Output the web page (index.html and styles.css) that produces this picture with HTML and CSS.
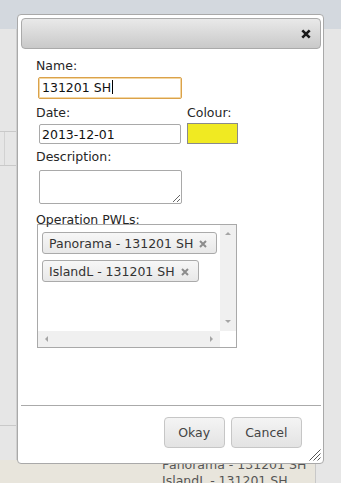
FILE: index.html
```html
<!DOCTYPE html>
<html>
<head>
<meta charset="utf-8">
<link rel="stylesheet" href="styles.css">
</head>
<body>
<div class="page">
  <div class="topbar"></div>
  <div class="main">
    <div class="side">
      <div class="side-row"><div class="side-cell"></div></div>
      <div class="side-rest"></div>
    </div>
  </div>
  <div class="strip">
    <div class="strip-beige">
      <div class="strip-list">
        <div>Panorama - 131201 SH</div>
        <div>IslandL - 131201 SH</div>
      </div>
    </div>
  </div>

  <div class="dialog">
    <div class="titlebar">
      <span class="close" title="Close">
        <svg width="10" height="10" viewBox="0 0 10 10"><path d="M1.3 1.3 L8.7 8.7 M8.7 1.3 L1.3 8.7" stroke="#1a1a1a" stroke-width="2.6" fill="none"/></svg>
      </span>
    </div>
    <div class="form">
      <label class="lbl">Name:</label>
      <div class="field name-field">131201 SH<span class="caret"></span></div>
      <div class="pair">
        <div class="col-date">
          <label class="lbl">Date:</label>
          <input class="field date-field" value="2013-12-01">
        </div>
        <div class="col-colour">
          <label class="lbl">Colour:</label>
          <div class="swatch"></div>
        </div>
      </div>
      <label class="lbl lbl-desc">Description:</label>
      <textarea class="desc"></textarea>
      <label class="lbl lbl-pwl">Operation PWLs:</label>
      <div class="pwl-box">
        <div class="pwl-list">
          <span class="tag">Panorama - 131201 SH<svg width="8" height="8" viewBox="0 0 8 8"><path d="M1 1 L7 7 M7 1 L1 7" stroke="#8c8c8c" stroke-width="2" fill="none"/></svg></span>
          <span class="tag">IslandL - 131201 SH<svg width="8" height="8" viewBox="0 0 8 8"><path d="M1 1 L7 7 M7 1 L1 7" stroke="#8c8c8c" stroke-width="2" fill="none"/></svg></span>
        </div>
        <div class="vscroll"><i class="arr up"></i><i class="arr down"></i></div>
        <div class="hscroll"><i class="arr left"></i><i class="arr right"></i></div>
        <div class="corner"></div>
      </div>
    </div>
    <div class="footer">
      <button class="btn">Okay</button>
      <button class="btn">Cancel</button>
    </div>
    <svg class="grip" width="12" height="12" viewBox="0 0 12 12"><path d="M11.5 0.5 L0.5 11.5 M11.5 4.5 L4.5 11.5 M11.5 8.5 L8.5 11.5" stroke="#555" stroke-width="1" fill="none"/></svg>
  </div>
</div>
</body>
</html>
```
FILE: styles.css
```css
* { box-sizing: border-box; }
body {
  margin: 0;
  font-family: "DejaVu Sans", Verdana, sans-serif;
  font-size: 12.5px;
  line-height: 15px;
}
.page {
  position: relative;
  width: 341px;
  height: 483px;
  overflow: hidden;
  background: #e6e6e6;
  display: flex;
  flex-direction: column;
}
.topbar {
  height: 29px;
  flex: none;
  background: #d3d8de;
}
.main {
  height: 431px;
  flex: none;
  display: flex;
}
.side {
  width: 17px;
  border-right: 1px solid #d0d0d0;
}
.side-row {
  margin-top: 102px;
  height: 35px;
  border-top: 1px solid #c9c9c9;
  border-bottom: 1px solid #c9c9c9;
}
.side-cell {
  width: 5px;
  height: 100%;
  border-right: 1px solid #d2d2d2;
}
.side-rest {
  height: 260px;
  border-bottom: 1px solid #c9c9c9;
}
.strip {
  flex: 1;
  display: flex;
}
.strip-beige {
  width: 316px;
  background: #e8e5dc;
  border-right: 1px solid #c8c8c8;
  overflow: hidden;
}
.strip-list {
  margin-top: -3px;
  padding-left: 162px;
  line-height: 16px;
  color: #555;
}

/* dialog */
.dialog {
  position: absolute;
  left: 17px;
  top: 14px;
  width: 307px;
  height: 450px;
  background: #fff;
  border: 1px solid #a9a9a9;
  border-radius: 4px;
  padding: 3px 2px 3px 3px;
  display: flex;
  flex-direction: column;
}
.titlebar {
  height: 31px;
  flex: none;
  border: 1px solid #aaa;
  border-radius: 4px;
  background: linear-gradient(#e9e9e9, #c9c9c9);
  display: flex;
  align-items: center;
  justify-content: flex-end;
  padding-right: 9px;
}
.close {
  display: flex;
  width: 10px;
  height: 10px;
}
.form {
  flex: 1;
  padding: 9px 0 0 15px;
  color: #262626;
}
.lbl {
  display: block;
  height: 15px;
}
.field {
  display: block;
  font: inherit;
  color: #111;
  background: #fff;
  padding: 0 2px;
  border-radius: 2px;
}
.name-field {
  margin: 4px 0 0 2px;
  width: 144px;
  height: 22px;
  border: 1px solid #dba24a;
  box-shadow: inset 0 0 0 1px #f3d7a4;
  line-height: 20px;
  padding-left: 3px;
}
.caret {
  display: inline-block;
  width: 1px;
  height: 14px;
  background: #000;
  vertical-align: -2px;
  margin-left: 1px;
}
.pair {
  display: flex;
  margin-top: 6px;
}
.col-date {
  width: 151px;
}
.date-field {
  margin: 4px 0 0 3px;
  width: 142px;
  height: 20px;
  border: 1px solid #a9a9a9;
  outline: none;
}
.swatch {
  margin-top: 3px;
  width: 51px;
  height: 21px;
  background: #f0ea22;
  border: 1px solid #8a8a8a;
}
.lbl-desc { margin-top: 5px; }
.desc {
  display: block;
  margin: 6px 0 0 3px;
  width: 143px;
  height: 34px;
  border: 1px solid #a9a9a9;
  border-radius: 2px;
  font: inherit;
  padding: 2px;
}
.lbl-pwl { margin-top: 8px; }
.pwl-box {
  margin: -3px 0 0 1px;
  width: 200px;
  height: 124px;
  border: 1px solid #a9a9a9;
  display: grid;
  grid-template-columns: 1fr 16px;
  grid-template-rows: 1fr 16px;
  background: #fff;
}
.pwl-list {
  display: flex;
  flex-direction: column;
  align-items: flex-start;
  gap: 6px;
  padding: 7px 0 0 4px;
  overflow: hidden;
}
.tag {
  display: inline-flex;
  align-items: center;
  gap: 6px;
  height: 22px;
  padding: 0 9px 0 6px;
  border: 1px solid #aaa;
  border-radius: 3px;
  background: linear-gradient(#f7f7f7, #e8e8e8);
  color: #333;
  white-space: nowrap;
}
.tag svg { margin-top: 2px; }
.vscroll {
  background: #f0f0f0;
  display: flex;
  flex-direction: column;
  justify-content: space-between;
  align-items: center;
  padding: 7px 0 8px;
}
.hscroll {
  background: #f0f0f0;
  display: flex;
  justify-content: space-between;
  align-items: center;
  padding: 0 7px 0 7px;
}
.corner { background: #fff; }
.arr {
  display: block;
  width: 0;
  height: 0;
}
.arr.up {
  border-left: 3px solid transparent;
  border-right: 3px solid transparent;
  border-bottom: 3px solid #a5a5a5;
}
.arr.down {
  border-left: 3px solid transparent;
  border-right: 3px solid transparent;
  border-top: 3px solid #a5a5a5;
}
.arr.left {
  border-top: 3px solid transparent;
  border-bottom: 3px solid transparent;
  border-right: 3px solid #a5a5a5;
}
.arr.right {
  border-top: 3px solid transparent;
  border-bottom: 3px solid transparent;
  border-left: 3px solid #a5a5a5;
}
.footer {
  height: 55px;
  flex: none;
  border-top: 1px solid #aaa;
  display: flex;
  justify-content: flex-end;
  align-items: flex-start;
  gap: 6px;
  padding: 11px 19px 0 0;
}
.btn {
  height: 31px;
  padding: 0 13.5px;
  font: inherit;
  color: #444;
  border: 1px solid #c6c6c6;
  border-radius: 4px;
  background: linear-gradient(#f4f4f4, #e3e3e3);
}
.grip {
  position: absolute;
  right: 2px;
  bottom: 2px;
}
```
